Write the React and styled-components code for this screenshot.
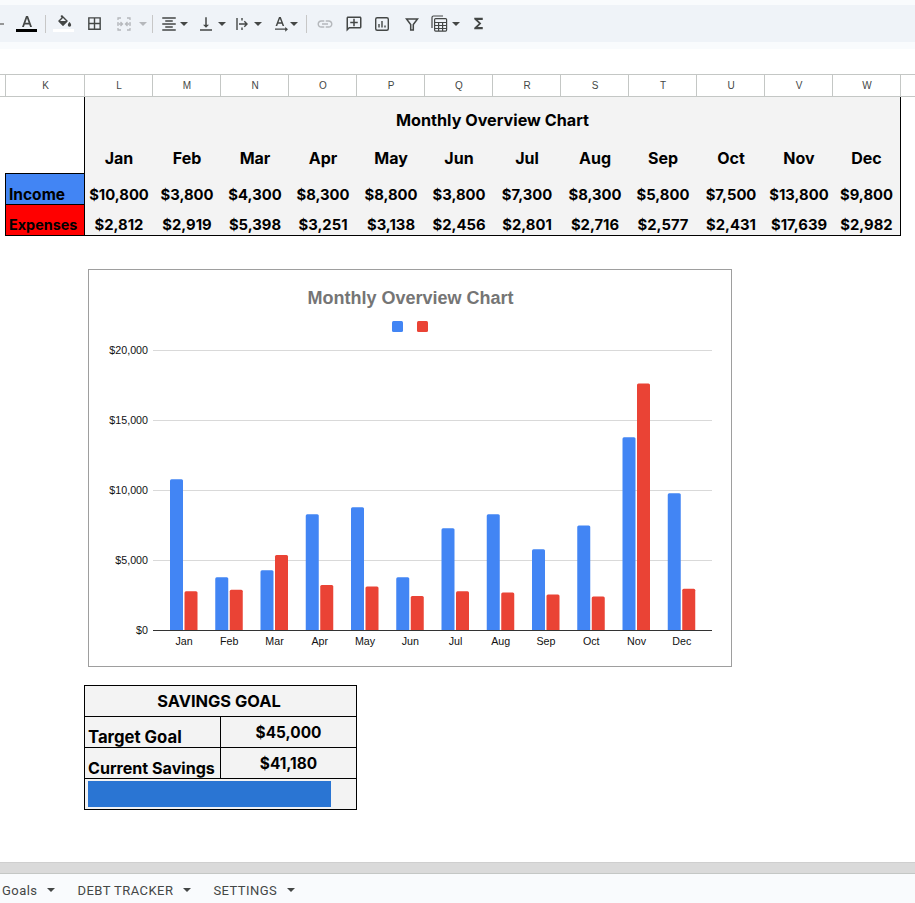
import React from 'react';
import styled, { createGlobalStyle } from 'styled-components';

const GlobalStyle = createGlobalStyle`
  html, body {
    margin: 0;
    padding: 0;
    background: #fff;
  }
  * {
    box-sizing: border-box;
  }
`;

const Page = styled.div`
  width: 915px;
  height: 903px;
  display: flex;
  flex-direction: column;
  overflow: hidden;
  background: #fff;
  font-family: Inter, "Liberation Sans", sans-serif;
`;

const ToolbarWrap = styled.div`
  height: 49px;
  padding: 5px 0 7px;
  background: #f9fbfd;
  flex: none;
`;

const Toolbar = styled.div`
  height: 37px;
  background: #eff3f8;
  display: flex;
  align-items: center;
`;

const Slot = styled.div`
  width: ${p => p.$w}px;
  height: 24px;
  flex: none;
  display: flex;
  align-items: center;
  justify-content: center;
  color: ${p => (p.$muted ? '#b5b8bc' : '#444746')};
`;

const Sep = styled.div`
  width: 1px;
  height: 18px;
  flex: none;
  background: #c7c7c7;
`;

const Caret = styled.div`
  width: 0;
  height: 0;
  border-left: 4px solid transparent;
  border-right: 4px solid transparent;
  border-top: 4px solid ${p => (p.$muted ? '#b5b8bc' : '#444746')};
`;

const ColorIcon = styled.div`
  width: 21px;
  display: flex;
  flex-direction: column;
  align-items: center;
`;

const ColorBar = styled.div`
  width: 21px;
  height: 3px;
  margin-top: 1px;
  background: ${p => p.$color};
`;

const ColumnHeader = styled.div`
  margin-top: 25px;
  height: 23px;
  flex: none;
  display: grid;
  grid-template-columns: 6px 79px repeat(12, 68px) 1fr;
  border-top: 1px solid #c4c7c5;
  border-bottom: 1px solid #c4c7c5;
`;

const ColumnCell = styled.div`
  display: flex;
  align-items: center;
  justify-content: center;
  padding-left: 1px;
  border-right: 1px solid #c4c7c5;
  font-family: "Liberation Sans", sans-serif;
  font-size: 10px;
  color: #444746;
`;

const OverviewTable = styled.div`
  margin-left: 5px;
  flex: none;
  display: grid;
  width: 896px;
  grid-template-columns: 80px repeat(12, 68px);
  grid-template-rows: 43px 33px 31px 32px;
  font-size: 15px;
  font-weight: 700;
  color: #000;
`;

const BlankCell = styled.div`
  grid-column: 1;
  grid-row: ${p => p.$rows};
  border-right: 1px solid #000;
`;

const TitleCell = styled.div`
  grid-column: 2 / span 12;
  display: flex;
  align-items: flex-end;
  justify-content: center;
  padding-bottom: 10px;
  font-size: 16.2px;
  background: #f3f3f3;
  border-right: 1px solid #000;
`;

const Cell = styled.div`
  display: flex;
  align-items: flex-end;
  justify-content: center;
  background: #f3f3f3;
  padding-bottom: ${p => p.$pad}px;
  font-size: ${p => p.$size}px;
  white-space: nowrap;
  border-right: ${p => (p.$last ? '1px solid #000' : 'none')};
  border-bottom: ${p => (p.$bottom ? '1px solid #000' : 'none')};
`;

const LabelCell = styled.div`
  display: flex;
  align-items: flex-end;
  padding: 0 0 ${p => p.$pad}px 3px;
  font-size: ${p => p.$size}px;
  background: ${p => p.$bg};
  border: 1px solid #000;
  border-bottom: ${p => (p.$bottom ? '1px solid #000' : 'none')};
`;

const ChartBox = styled.div`
  width: 644px;
  height: 398px;
  margin: 33px 0 0 88px;
  flex: none;
  border: 1px solid #9e9e9e;
  background: #fff;
`;

const ChartSvg = styled.svg`
  display: block;
  font-family: "Liberation Sans", sans-serif;
`;

const SavingsTable = styled.div`
  width: 273px;
  height: 125px;
  margin: 18px 0 0 84px;
  flex: none;
  display: grid;
  grid-template-columns: 136px 135px;
  grid-template-rows: 31px 31px 31px 30px;
  border: 1px solid #000;
  background: #f3f3f3;
  font-size: 15.400px;
  font-weight: 700;
  color: #000;
`;

const SavingsTitle = styled.div`
  grid-column: 1 / span 2;
  display: flex;
  align-items: center;
  justify-content: center;
  padding-right: 3px;
  font-size: 16.400px;
  border-bottom: 1px solid #000;
`;

const SavingsLabel = styled.div`
  display: flex;
  align-items: flex-end;
  padding-left: 3px;
  white-space: nowrap;
  font-size: ${p => p.$size}px;
  border-right: 1px solid #000;
  border-bottom: 1px solid #000;
`;

const SavingsValue = styled.div`
  display: flex;
  align-items: center;
  justify-content: center;
  border-bottom: 1px solid #000;
`;

const ProgressCell = styled.div`
  grid-column: 1 / span 2;
  padding: 2px 3px;
`;

const ProgressFill = styled.div`
  height: 26px;
  background: #2a75d3;
`;

const Spacer = styled.div`
  flex: 1;
`;

const ScrollTrack = styled.div`
  height: 12px;
  flex: none;
  background: #dadada;
  border-top: 1px solid #cfcfcf;
  border-bottom: 1px solid #c4c7c5;
`;

const TabBar = styled.div`
  height: 29px;
  flex: none;
  display: flex;
  align-items: center;
  padding: 3px 0 0 2px;
  background: #f9fbfd;
  font-family: Roboto, "Liberation Sans", sans-serif;
  font-size: 13px;
  letter-spacing: 0.45px;
  color: #444746;
`;

const Tab = styled.div`
  display: flex;
  align-items: center;
  gap: 10px;
  margin-right: 22px;
`;

const Icon = ({ d, size = 18, flip, children }) => (
  <svg width={size} height={size} viewBox="0 0 24 24" fill="currentColor">
    {d && <path d={d} transform={flip ? 'matrix(-1 0 0 1 24 0)' : undefined} />}
    {children}
  </svg>
);

const tools = [
  { w: 8, el: <svg width="8" height="8"><path d="M0 4h4" stroke="#777" strokeWidth="1.5" /></svg> },
  { w: 37, el: (
    <ColorIcon>
      <svg width="14" height="13" viewBox="0 0 14 13" fill="#444746"><path d="M6 1h2l4 11h-1.9l-.9-2.6H4.800L3.900 12H2zM5.400 7.800h3.200L7 3.200z" /></svg>
      <ColorBar $color="#000" />
    </ColorIcon>
  ) },
  { sep: true },
  { w: 35, el: (
    <ColorIcon>
      <svg width="18" height="13" viewBox="0 0 18 13" fill="#444746">
        <path d="M7 0l6 6-5 5-5-5 3.500-3.500L5.500 1zM5 6h6L8 3z" />
        <path d="M3.800 6.400h8.500L8 10.700zM14.500 7s-1.700 1.900-1.700 3a1.700 1.700 0 0 0 3.400 0c0-1.100-1.700-3-1.700-3z" />
      </svg>
      <ColorBar $color="#fff" />
    </ColorIcon>
  ) },
  { w: 27, el: <Icon d="M3 3v18h18V3H3zm8 16H5v-6h6v6zm0-8H5V5h6v6zm8 8h-6v-6h6v6zm0-8h-6V5h6v6z" size={17} /> },
  { w: 32, muted: true, el: (
    <svg width="16" height="16" viewBox="0 0 16 16" fill="none" stroke="currentColor" strokeWidth="1.3">
      <path d="M5 2H2v2M2 6v1M2 9v1M2 12v2h3M11 2h3v2M14 6v1M14 9v1M14 12v2h-3" />
      <path d="M1 8h5M4.500 6l2 2-2 2M15 8h-5M11.500 6l-2 2 2 2" />
    </svg>
  ) },
  { w: 6, muted: true, el: <Caret $muted /> },
  { w: 6 },
  { sep: true },
  { w: 6 },
  { w: 20, el: <Icon d="M7 15v2h10v-2H7zm-4 6h18v-2H3v2zm0-8h18v-2H3v2zm4-6v2h10V7H7zM3 3v2h18V3H3z" /> },
  { w: 10, el: <Caret /> },
  { w: 7 },
  { w: 20, el: <Icon d="M16 13h-3V3h-2v10H8l4 4 4-4zM4 19v2h16v-2H4z" /> },
  { w: 11, el: <Caret /> },
  { w: 5 },
  { w: 20, el: (
    <svg width="14" height="14" viewBox="0 0 14 14" fill="none" stroke="currentColor" strokeWidth="1.4">
      <path d="M2 1v12M7 1v2.500M7 10.500V13M4 7h8M9.300 4.300 12 7 9.300 9.700" />
    </svg>
  ) },
  { w: 11, el: <Caret /> },
  { w: 8 },
  { w: 20, el: (
    <svg width="14" height="16" viewBox="0 0 14 16" fill="currentColor">
      <path d="M5 1h1.800l3.400 9H8.600l-.8-2.300H4L3.200 10H1.600zM4.500 6.300h2.800L5.900 2.700zM1 12.600h10.200v-1.700L14 13.300l-2.800 2.400v-1.900H1z" />
    </svg>
  ) },
  { w: 6, el: <Caret /> },
  { w: 9 },
  { sep: true },
  { w: 4 },
  { w: 28, muted: true, el: <Icon d="M3.900 12c0-1.710 1.390-3.100 3.100-3.100h4V7H7c-2.760 0-5 2.240-5 5s2.240 5 5 5h4v-1.900H7c-1.710 0-3.100-1.390-3.100-3.100zM8 13h8v-2H8v2zm9-6h-4v1.900h4c1.710 0 3.100 1.390 3.100 3.100s-1.390 3.100-3.100 3.100h-4V17h4c2.760 0 5-2.240 5-5s-2.240-5-5-5z" /> },
  { w: 29, el: <Icon d="M22 4c0-1.100-.9-2-2-2H4c-1.100 0-2 .9-2 2v12c0 1.100.9 2 2 2h14l4 4V4zm-2 0v13.170L18.830 16H4V4h16zM13 5h-2v4H7v2h4v4h2v-4h4V9h-4z" flip /> },
  { w: 28, el: (
    <svg width="16" height="16" viewBox="0 0 16 16" fill="none" stroke="currentColor" strokeWidth="1.4">
      <rect x="1.700" y="1.700" width="12.600" height="12.600" rx="1.500" />
      <path d="M5 8v3.500M8 5v6.500M11 9.500v2" />
    </svg>
  ) },
  { w: 31, el: (
    <svg width="14" height="14" viewBox="0 0 14 14" fill="none" stroke="currentColor" strokeWidth="1.5">
      <path d="M1.500 2h11L8.300 7.500V13H5.700V7.500z" />
    </svg>
  ) },
  { w: 24, el: (
    <svg width="17" height="17" viewBox="0 0 17 17" fill="none" stroke="currentColor" strokeWidth="1.200">
      <path d="M1 13V2.500A1.500 1.500 0 0 1 2.500 1H12" />
      <rect x="3.600" y="3.600" width="12" height="12.500" rx="1" />
      <path d="M3.600 7.500h12M3.600 10.500h12M3.600 13.500h12M7.600 7.500v8.500M11.600 7.500v8.500" />
    </svg>
  ) },
  { w: 9, el: <Caret /> },
  { w: 6 },
  { w: 24, el: <Icon d="M18 4H6v2l6.500 6L6 18v2h12v-3h-7l5-5-5-5h7z" size={17} /> },
];

const columns = ['K', 'L', 'M', 'N', 'O', 'P', 'Q', 'R', 'S', 'T', 'U', 'V', 'W'];

const months = ['Jan', 'Feb', 'Mar', 'Apr', 'May', 'Jun', 'Jul', 'Aug', 'Sep', 'Oct', 'Nov', 'Dec'];
const income = [10800, 3800, 4300, 8300, 8800, 3800, 7300, 8300, 5800, 7500, 13800, 9800];
const expenses = [2812, 2919, 5398, 3251, 3138, 2456, 2801, 2716, 2577, 2431, 17639, 2982];

const money = n => '$' + n.toLocaleString('en-US');

const BAR_W = 13;
const STEP = 45.25;
const FIRST_X = 170 - 89;
const BASE_Y = 630 - 270;
const SCALE = 280 / 20000;

const barPath = (x, value) => {
  const top = BASE_Y - value * SCALE + 0.5;
  return `M${x} ${BASE_Y}V${top + 1.5}Q${x} ${top} ${x + 1.5} ${top}H${x + BAR_W - 1.5}Q${x + BAR_W} ${top} ${x + BAR_W} ${top + 1.5}V${BASE_Y}Z`;
};

const Chart = () => (
  <ChartSvg width="642" height="396" viewBox="0 0 642 396">
    <text x="321.500" y="34" textAnchor="middle" fontSize="18" fontWeight="700" fill="#757575">Monthly Overview Chart</text>
    <rect x="303" y="51" width="11" height="11" rx="1.500" fill="#4285f4" />
    <rect x="328" y="51" width="11" height="11" rx="1.500" fill="#ea4335" />
    {[20000, 15000, 10000, 5000, 0].map(v => {
      const y = BASE_Y - v * SCALE;
      return (
        <g key={v}>
          {v > 0 && <line x1="64" x2="623" y1={y + 0.5} y2={y + 0.5} stroke="#d9d9d9" />}
          <text x="59" y={y + 4} textAnchor="end" fontSize="10.700" fill="#111">{money(v)}</text>
        </g>
      );
    })}
    {months.map((m, i) => {
      const x = FIRST_X + i * STEP;
      return (
        <g key={m}>
          <path d={barPath(x, income[i])} fill="#4285f4" />
          <path d={barPath(x + BAR_W + 1.500, expenses[i])} fill="#ea4335" />
          <text x={x + 14} y={BASE_Y + 14.500} textAnchor="middle" fontSize="10.700" fill="#111">{m}</text>
        </g>
      );
    })}
    <line x1="64" x2="623" y1={BASE_Y + 0.5} y2={BASE_Y + 0.5} stroke="#333" />
  </ChartSvg>
);

const App = () => {
  const progress = (41180 / 45000) * 100;

  return (
    <Page>
      <GlobalStyle />
      <ToolbarWrap>
        <Toolbar>
          {tools.map((t, i) => (t.sep ? <Sep key={i} /> : <Slot key={i} $w={t.w} $muted={t.muted}>{t.el}</Slot>))}
        </Toolbar>
      </ToolbarWrap>

      <ColumnHeader>
        <ColumnCell />
        {columns.map(c => <ColumnCell key={c}>{c}</ColumnCell>)}
      </ColumnHeader>

      <OverviewTable>
        <BlankCell $rows="1 / span 2" />
        <TitleCell>Monthly Overview Chart</TitleCell>
        {months.map((m, i) => <Cell key={m} $pad={5} $size={16} $last={i === 11}>{m}</Cell>)}
        <LabelCell $bg="#4285f4" $size={15.500} $pad={0}>Income</LabelCell>
        {income.map((v, i) => <Cell key={i} $pad={0} $size={14.800} $last={i === 11}>{money(v)}</Cell>)}
        <LabelCell $bg="#ff0000" $size={14.400} $pad={2} $bottom>Expenses</LabelCell>
        {expenses.map((v, i) => <Cell key={i} $pad={1} $size={14.800} $last={i === 11} $bottom>{money(v)}</Cell>)}
      </OverviewTable>

      <ChartBox>
        <Chart />
      </ChartBox>

      <SavingsTable>
        <SavingsTitle>SAVINGS GOAL</SavingsTitle>
        <SavingsLabel $size={16.700}>Target Goal</SavingsLabel>
        <SavingsValue>$45,000</SavingsValue>
        <SavingsLabel $size={16.100}>Current Savings</SavingsLabel>
        <SavingsValue>$41,180</SavingsValue>
        <ProgressCell>
          <ProgressFill style={{ width: `${progress}%` }} />
        </ProgressCell>
      </SavingsTable>

      <Spacer />
      <ScrollTrack />
      <TabBar>
        <Tab>Goals <Caret /></Tab>
        <Tab>DEBT TRACKER <Caret /></Tab>
        <Tab>SETTINGS <Caret /></Tab>
      </TabBar>
    </Page>
  );
};

export default App;
